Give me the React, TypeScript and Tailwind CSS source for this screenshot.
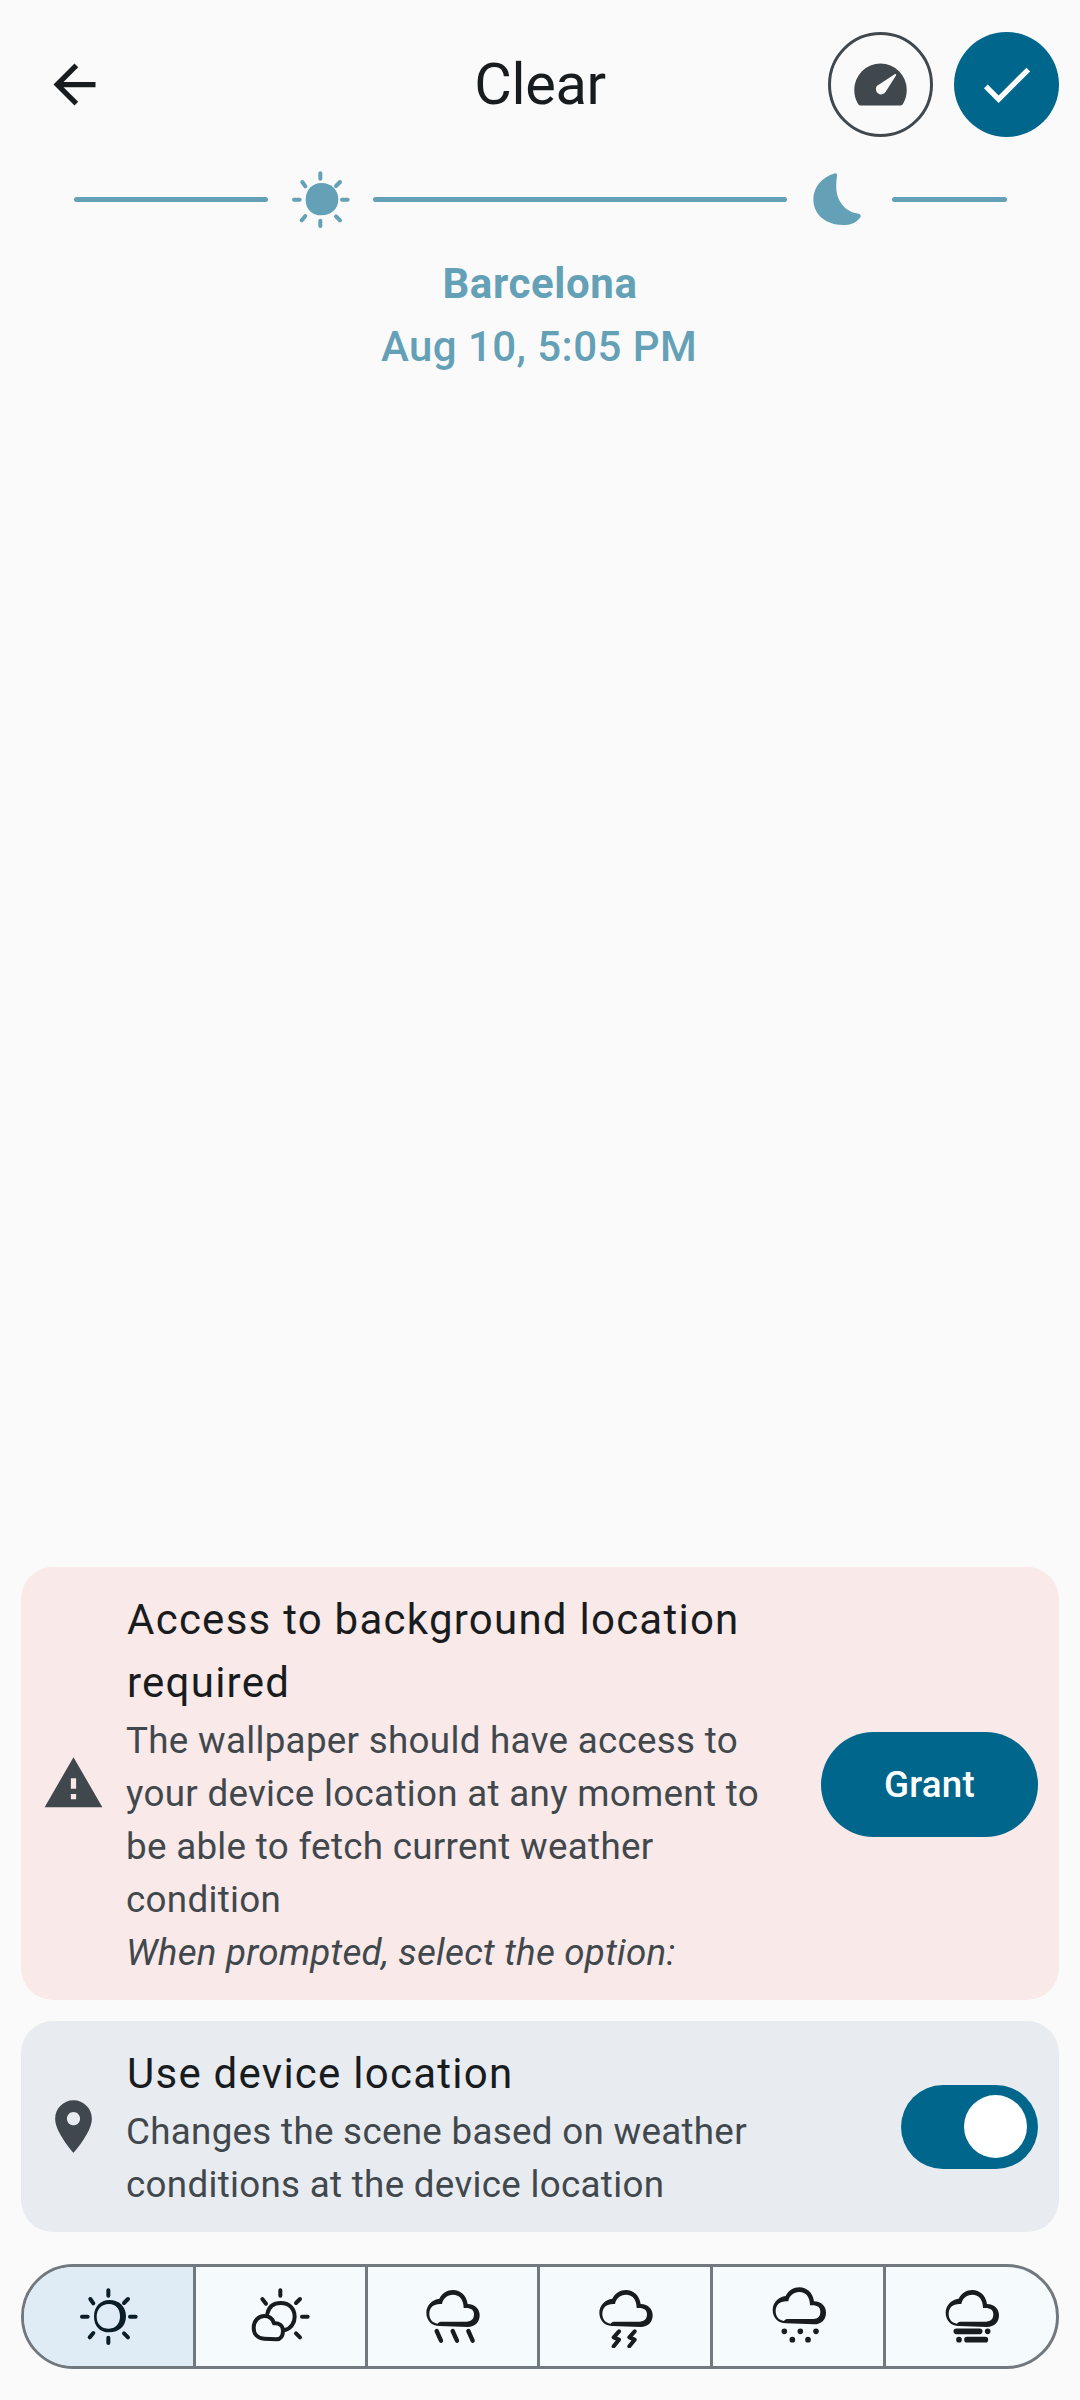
import type { ReactNode } from "react";

function Icon({ children, className = "" }: { children: ReactNode; className?: string }) {
  return (
    <svg viewBox="0 0 24 24" className={`h-[63px] w-[63px] shrink-0 ${className}`} fill="currentColor">
      {children}
    </svg>
  );
}

// Weather glyphs are drawn on a 189-unit grid, three units per pixel.
function WeatherIcon({ children }: { children: ReactNode }) {
  return (
    <svg
      viewBox="0 0 189 189"
      className="h-[63px] w-[63px] shrink-0"
      fill="none"
      stroke="currentColor"
      strokeLinecap="round"
      strokeLinejoin="round"
    >
      {children}
    </svg>
  );
}

const SUN_RAYS = "M94 16v16M94 158v16M15 95h17M159 95h17M40 42l9 13M153 42l-12 12M38 157l11-13M153 157l-12-12";

const Rays = () => <path d={SUN_RAYS} strokeWidth="12" />;

const ClearIcon = () => (
  <WeatherIcon>
    <Rays />
    <path
      fillRule="evenodd"
      stroke="none"
      fill="currentColor"
      d="M97 45C127 45 147 65 147 94C147 124 126 142 97 142C68 142 51 123 51 95C51 65 70 45 97 45ZM96 57C74 57 59 73 59 95C59 117 74 131 96 131C117 131 129 115 129 94C129 72 117 57 96 57Z"
    />
  </WeatherIcon>
);

const PartlyCloudyIcon = () => (
  <WeatherIcon>
    <path d="M94 16v16M159 95h17M40 42l11 14M153 42l-12 12M153 157l-12-12" strokeWidth="12" />
    <path d="M55 86C60 64 76 54 95 54C121 54 137 71 137 95C137 112 127 130 108 135" strokeWidth="12" />
    <path
      d="M45 161C26 160 14 147 14 128C14 108 28 93 46 93C61 93 71 101 75 115C89 113 102 121 102 137C102 149 98 162 82 163Z"
      strokeWidth="12"
    />
  </WeatherIcon>
);

const CLOUD =
  "M50 126C26 126 10 109 10 86C10 64 28 46 49 44C57 27 73 18 90 18C112 18 131 34 134 60C157 61 170 75 170 94C170 115 156 129 134 129Z M44 119C46 116 48 113 54 113L132 113C146 112 153 104 153 91C153 76 142 70 122 72C122 47 110 32 90 32C73 32 59 44 57 60C34 58 19 68 19 90C19 105 28 117 44 119Z";

const Cloud = ({ x = 6, y = -3 }: { x?: number; y?: number }) => (
  <path transform={`translate(${x} ${y})`} fillRule="evenodd" stroke="none" fill="currentColor" d={CLOUD} />
);

const RainIcon = () => (
  <WeatherIcon>
    <Cloud />
    <path d="M47 138l13 29M95 138l13 29M142 138l13 29" strokeWidth="13" />
  </WeatherIcon>
);

const StormIcon = () => (
  <WeatherIcon>
    <Cloud x={6} />
    <path d="M75 139L59 157L75 164L59 184M122 139L106 157L122 164L106 184" strokeWidth="12" />
  </WeatherIcon>
);

const SnowIcon = () => (
  <WeatherIcon>
    <Cloud x={7} y={-11} />
    <path d="M52 139h0M100 139h0M147 139h0M76 164h0M123 164h0" strokeWidth="17" />
  </WeatherIcon>
);

const FogIcon = () => (
  <WeatherIcon>
    <Cloud x={7} />
    <path d="M49 139h70M143 139h0M57 164h0M81 164h55" strokeWidth="17" />
  </WeatherIcon>
);

const Line = ({ className }: { className: string }) => (
  <div className={`h-[5px] shrink-0 rounded-full bg-[#64a1b7] ${className}`} />
);

function Header() {
  return (
    <header className="grid h-[105px] grid-cols-[1fr_auto_1fr] items-center">
      <button aria-label="Back" className="ml-[22px] w-[63px] text-[#191c1e]">
        <Icon>
          <path d="M20 11H7.83l5.59-5.59L12 4l-8 8 8 8 1.41-1.41L7.83 13H20v-2z" />
        </Icon>
      </button>
      <h1 className="mb-[2px] text-[57.75px] leading-[74px] tracking-[-0.3px] text-[#191c1e]">Clear</h1>
      <div className="flex justify-end gap-[21px]">
        <button
          aria-label="Frame rate"
          className="flex h-[105px] w-[105px] items-center justify-center rounded-full border-[3px] border-[#41484d] text-[#41484d]"
        >
          <Icon>
            <path
              fillRule="evenodd"
              d="M12 4A10 10 0 0 0 2 14C2 16 2.5 17.8 3.3 19.1C3.6 19.7 4 20 4.6 20H19.4C20 20 20.4 19.7 20.7 19.1C21.5 17.8 22 16 22 14A10 10 0 0 0 12 4ZM17.4 8.1C17.8 7.9 18.1 8.2 17.9 8.6L13.9 14.9A2 2 0 1 1 10.6 12.6Z"
            />
          </Icon>
        </button>
        <button
          aria-label="Apply"
          className="flex h-[105px] w-[105px] items-center justify-center rounded-full bg-[#00668b] text-white"
        >
          <Icon>
            <path d="M9 16.17L4.83 12l-1.42 1.41L9 19 21 7l-1.41-1.41z" />
          </Icon>
        </button>
      </div>
    </header>
  );
}

function Timeline() {
  return (
    <div className="mr-[52px] ml-[53px] flex h-[63px] items-center gap-[21px] text-[#64a1b7]">
      <Line className="w-[194px]" />
      <WeatherIcon>
        <Rays />
        <path
          stroke="none"
          fill="currentColor"
          d="M97 45C127 45 148 65 148 94C148 124 126 142 97 142C68 142 50 123 50 95C50 65 70 45 97 45Z"
        />
      </WeatherIcon>
      <Line className="w-[414px]" />
      <WeatherIcon>
        <path
          stroke="none"
          fill="currentColor"
          d="M77 17C84 14 88 17 87 24C82 60 84 88 103 110C118 129 134 134 152 137C159 139 160 144 156 149C144 165 126 171 104 171C55 171 16 141 16 94C16 55 44 28 77 17Z"
        />
      </WeatherIcon>
      <Line className="w-[115px]" />
    </div>
  );
}

function Card({
  tone,
  icon,
  title,
  children,
  action,
}: {
  tone: string;
  icon: ReactNode;
  title: string;
  children: ReactNode;
  action: ReactNode;
}) {
  return (
    <section className={`flex items-center gap-[21px] rounded-[32px] p-[21px] ${tone}`}>
      <div className="text-[#41484d]">{icon}</div>
      <div className="flex-1">
        <h2 className="pl-px text-[42px] leading-[63px] tracking-[1.25px] text-[#191c1e]">{title}</h2>
        <p className="text-[36.75px] leading-[53px] tracking-[0.3px] text-[#41484d]">{children}</p>
      </div>
      {action}
    </section>
  );
}

const SCENES = [
  { name: "Clear", icon: <ClearIcon /> },
  { name: "Partly cloudy", icon: <PartlyCloudyIcon /> },
  { name: "Rain", icon: <RainIcon /> },
  { name: "Storm", icon: <StormIcon /> },
  { name: "Snow", icon: <SnowIcon /> },
  { name: "Fog", icon: <FogIcon /> },
];

function SceneSelector() {
  return (
    <nav className="grid h-[105px] grid-cols-[172px_172px_172px_173px_173px_170px] overflow-hidden rounded-full border-[3px] border-[#71787e] bg-[#f5fafd]">
      {SCENES.map((scene, i) => (
        <button
          key={scene.name}
          aria-label={scene.name}
          className={`flex items-center justify-center ${i === 0 ? "bg-[#e0ecf5] text-[#0b1e28]" : "text-[#191c1e]"} ${
            i < 5 ? "border-r-[3px] border-[#71787e]" : ""
          }`}
        >
          {scene.icon}
        </button>
      ))}
    </nav>
  );
}

export default function App() {
  return (
    <div className="flex h-[2400px] w-[1080px] flex-col bg-[#fafafa] px-[21px] pt-8 pb-[31px] font-['Roboto',sans-serif]">
      <Header />
      <div className="mt-[31px]">
        <Timeline />
      </div>
      <div className="mt-[21px] text-center text-[42px] leading-[63px] text-[#64a1b7]">
        <p className="font-bold tracking-[0.6px]">Barcelona</p>
        <p className="pr-[2px] font-medium tracking-[0.45px]">Aug 10, 5:05 PM</p>
      </div>

      <main className="mt-auto flex flex-col gap-[21px]">
        <Card
          tone="bg-[#f9e9e8]"
          title="Access to background location required"
          icon={
            <Icon>
              <path d="M1 21h22L12 2 1 21zm12-3h-2v-2h2v2zm0-4h-2v-4h2v4z" />
            </Icon>
          }
          action={
            <button className="mt-px h-[105px] w-[217px] rounded-full bg-[#00668b] pt-px text-[36.75px] font-medium tracking-[0.2px] text-white">
              Grant
            </button>
          }
        >
          The wallpaper should have access to your device location at any moment to be able to fetch current weather
          condition
          <br />
          <i className="tracking-[0.23px]">When prompted, select the option:</i>
        </Card>
        <Card
          tone="bg-[#e8ebef]"
          title="Use device location"
          icon={
            <Icon>
              <path d="M12 2C8.13 2 5 5.13 5 9c0 5.25 7 13 7 13s7-7.75 7-13c0-3.87-3.13-7-7-7zm0 9.500c-1.380 0-2.500-1.120-2.500-2.500s1.120-2.500 2.500-2.500 2.500 1.120 2.500 2.500-1.120 2.500-2.500 2.500z" />
            </Icon>
          }
          action={
            <button
              role="switch"
              aria-checked="true"
              aria-label="Use device location"
              className="flex h-[84px] w-[137px] items-center justify-end rounded-full bg-[#00668b] pr-[11px]"
            >
              <span className="h-[63px] w-[63px] rounded-full bg-white" />
            </button>
          }
        >
          Changes the scene based on weather conditions at the device location
        </Card>
      </main>
      <div className="mt-8">
        <SceneSelector />
      </div>
    </div>
  );
}
